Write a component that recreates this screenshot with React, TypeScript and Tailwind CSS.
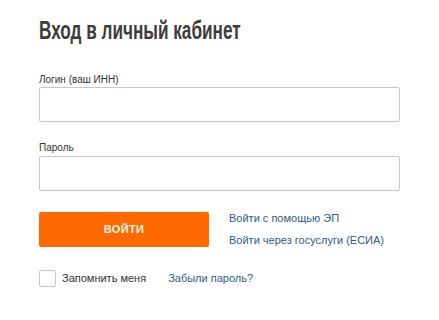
export default function App() {
  return (
    <main
      className="min-h-screen w-full bg-white px-[39px] pt-[14px] text-[#333]"
      style={{ fontFamily: "Arial, 'Liberation Sans', sans-serif" }}
    >
      {/* Heading */}
      <h1 className="h-[32px] text-[26px] font-bold leading-[32px] text-[#3d3d3d]">
        <span className="inline-block origin-left scale-x-[0.66] whitespace-nowrap">
          Вход в личный кабинет
        </span>
      </h1>

      <form className="mt-[27px] w-[361px]">
        {/* Login */}
        <label className="block text-[10px] leading-[13px] text-[#333]">
          Логин (ваш ИНН)
        </label>
        <input
          type="text"
          className="mt-[1px] block h-[35px] w-full rounded-[2px] border border-[#c8c8c8] bg-white px-2 outline-none"
        />

        {/* Password */}
        <label className="mt-[19px] block text-[10px] leading-[13px] text-[#333]">
          Пароль
        </label>
        <input
          type="password"
          className="mt-[2px] block h-[35px] w-full rounded-[2px] border border-[#c8c8c8] bg-white px-2 outline-none"
        />

        {/* Actions */}
        <div className="mt-[21px] flex items-start gap-[20px]">
          <button
            type="button"
            className="h-[35px] w-[170px] rounded-[2px] bg-[#ff6a00] text-[11px] font-bold tracking-[0.3px] text-[#fff6ea]"
          >
            ВОЙТИ
          </button>
          <div className="flex flex-col gap-[9px] text-[11px] leading-[13px] text-[#2b5b8c]">
            <a href="#">Войти с помощью ЭП</a>
            <a href="#">Войти через госуслуги (ЕСИА)</a>
          </div>
        </div>

        {/* Remember */}
        <div className="mt-[23px] flex items-center text-[11px]">
          <span className="h-[17px] w-[17px] rounded-[2px] border border-[#c8c8c8] bg-white" />
          <span className="ml-[6px] text-[#333]">Запомнить меня</span>
          <a href="#" className="ml-[22px] text-[#2b5b8c]">
            Забыли пароль?
          </a>
        </div>
      </form>
    </main>
  );
}
